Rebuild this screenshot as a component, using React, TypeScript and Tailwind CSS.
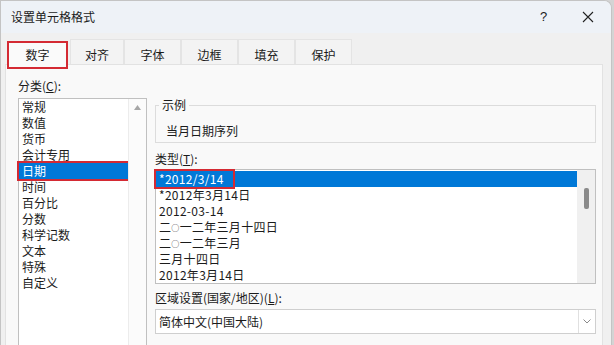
import React from 'react';

const tabs = ['对齐', '字体', '边框', '填充', '保护'];

const categories = [
  '常规',
  '数值',
  '货币',
  '会计专用',
  '日期',
  '时间',
  '百分比',
  '分数',
  '科学记数',
  '文本',
  '特殊',
  '自定义',
];

const types = [
  '*2012/3/14',
  '*2012年3月14日',
  '2012-03-14',
  '二○一二年三月十四日',
  '二○一二年三月',
  '三月十四日',
  '2012年3月14日',
];

// the small zero circle is drawn at a smaller size, as in the Windows UI font
const renderType = (t: string) => {
  const parts = t.split('○');
  if (parts.length === 1) return t;
  return (
    <>
      {parts[0]}
      <span className="text-[8px] align-[1px]">○</span>
      {parts[1]}
    </>
  );
};

const App: React.FC = () => {
  return (
    <div className="w-[614px] h-[345px] overflow-hidden bg-[#d4d4d4] font-['Noto_Sans_CJK_SC','Liberation_Sans',sans-serif] text-[12px] text-[#1b1b1b]">
      <div className="w-[612px] h-full flex flex-col bg-[#f0f0f0] border-l border-r border-t border-[#c4c4c4] rounded-tr-[8px] overflow-hidden">
        {/* title bar */}
        <div className="h-[32px] shrink-0 flex items-center bg-[#eef2f7]">
          <div className="pl-[10px] text-[12px] leading-[16px]">设置单元格格式</div>
          <div className="ml-auto flex h-full">
            <div className="w-[46px] h-full flex items-center justify-center pl-[3px] font-['Liberation_Sans',sans-serif] text-[13px]">
              ?
            </div>
            <div className="w-[46px] h-full flex items-center justify-center">
              <svg width="12" height="12" viewBox="0 0 12 12">
                <path d="M1 1L11 11M11 1L1 11" stroke="#222" strokeWidth="1.1" fill="none" />
              </svg>
            </div>
          </div>
        </div>

        {/* tab strip */}
        <div className="h-[31px] shrink-0 flex items-end pl-[6px]">
          <div className="relative z-10 -mb-[5px] w-[61px] h-[28px] flex items-center justify-center bg-[#fafafa] border-2 border-[#d42a33]">
            数字
          </div>
          <div className="flex ml-[2px]">
            {tabs.map((t, i) => (
              <div
                key={t}
                className={`${i === 0 ? 'w-[54px]' : 'w-[57px]'} h-[25px] flex items-center justify-center pt-[5px] bg-[#f3f3f3] border border-b-0 border-[#e4e4e4]`}
              >
                {t}
              </div>
            ))}
          </div>
        </div>

        {/* panel */}
        <div className="flex-1 ml-[4px] mr-[8px] flex bg-[#f9f9f9] border border-b-0 border-[#e2e2e2] pl-[12px] pt-[13px]">
          {/* left column */}
          <div className="w-[129px] shrink-0 flex flex-col">
            <div className="h-[16px] leading-[16px]">
              分类(<span className="underline">C</span>):
            </div>
            <div className="mt-[4px] flex-1 flex bg-white border border-b-0 border-[#c0c0c0]">
              <div className="w-[109px]">
                {categories.map((c) => (
                  <div
                    key={c}
                    className={`h-[16px] leading-[16px] pl-[3px] ${
                      c === '日期' ? 'bg-[#0078d7] text-white outline-2 outline-[#d42a33]' : ''
                    }`}
                  >
                    {c}
                  </div>
                ))}
              </div>
              <div className="flex-1 border-l border-[#ececec] bg-[#fbfbfb] flex justify-center pt-[6px]">
                <svg width="7" height="5" viewBox="0 0 7 5">
                  <path d="M3.5 0L7 5H0Z" fill="#a6a6a6" />
                </svg>
              </div>
            </div>
          </div>

          {/* right column */}
          <div className="ml-[8px] w-[441px] shrink-0 flex flex-col">
            <fieldset className="mt-[19px] border border-[#dcdcdc] pb-[3px]">
              <legend className="ml-[3px] px-[3px] h-[16px] leading-[16px]">示例</legend>
              <div className="pl-[10px] pt-[10px] h-[26px] leading-[16px]">当月日期序列</div>
            </fieldset>

            <div className="mt-[8px] h-[16px] leading-[16px]">
              类型(<span className="underline">T</span>):
            </div>
            <div className="mt-[2px] h-[115px] flex bg-white border border-[#c0c0c0]">
              <div className="flex-1 pt-[1px]">
                {types.map((t, i) => (
                  <div
                    key={t}
                    className={`h-[16px] leading-[16px] tracking-[0.3px] ${i === 0 ? 'bg-[#0078d7] text-white' : 'pl-[3px]'}`}
                  >
                    {i === 0 ? (
                      <span className="inline-block w-[77px] h-[16px] pl-[3px] outline-2 outline-[#d42a33]">{t}</span>
                    ) : (
                      renderType(t)
                    )}
                  </div>
                ))}
              </div>
              <div className="w-[18px] bg-[#f0f0f0] flex justify-center pt-[18px]">
                <div className="w-[5px] h-[21px] rounded-[2px] bg-[#8a8a8a]" />
              </div>
            </div>

            <div className="mt-[6px] h-[16px] leading-[16px]">
              区域设置(国家/地区)(<span className="underline">L</span>):
            </div>
            <div className="mt-[3px] h-[25px] flex bg-white border border-[#cfcfcf]">
              <div className="flex-1 pl-[3px] flex items-center">简体中文(中国大陆)</div>
              <div className="w-[17px] border-l border-[#e0e0e0] flex items-center justify-center">
                <svg width="8" height="5" viewBox="0 0 8 5">
                  <path d="M0.5 0.5L4 4L7.5 0.5" stroke="#8a8a8a" strokeWidth="1" fill="none" />
                </svg>
              </div>
            </div>
          </div>
        </div>
      </div>
    </div>
  );
};

export default App;
